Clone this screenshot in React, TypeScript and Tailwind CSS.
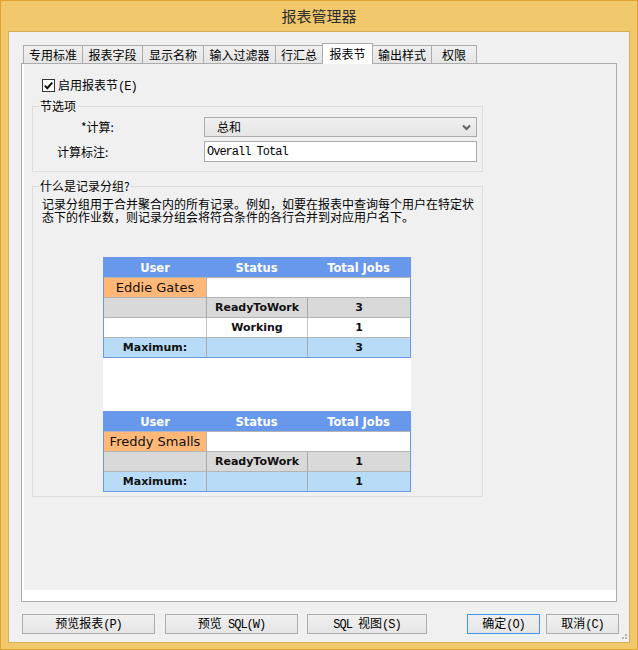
import React from 'react';

// ascii parts of the labels are drawn in a narrow mono face, like the bitmap font in the dialog
const A = ({ children }: { children: React.ReactNode }) => (
  <span className="font-['Liberation_Mono',monospace] text-[12px] tracking-[-1px]">{children}</span>
);

const tabs = [
  { label: '专用标准', w: 'w-[60px]' },
  { label: '报表字段', w: 'w-[61px]' },
  { label: '显示名称', w: 'w-[62px]' },
  { label: '输入过滤器', w: 'w-[73px]' },
  { label: '行汇总', w: 'w-[48px]' },
  { label: '报表节', w: 'w-[51px]', active: true },
  { label: '输出样式', w: 'w-[60px]' },
  { label: '权限', w: 'w-[46px]' },
];

type Row = {
  cells: [string, string, string];
  kind: 'user' | 'gray' | 'white' | 'max';
};

const HeaderRow = () => (
  <div className="flex h-[19px] items-center bg-[#6898eb] text-[11.5px] font-bold text-white">
    <div className="w-[102px] text-center">User</div>
    <div className="w-[101px] text-center">Status</div>
    <div className="flex-1 text-center">Total Jobs</div>
  </div>
);

const DataRow = ({ row }: { row: Row }) => {
  if (row.kind === 'user') {
    return (
      <div className="flex h-[20px] border-t border-[#b4b4b4] bg-white">
        <div className="flex w-[102px] items-center justify-center bg-[#ffb878] text-[13px] text-[#111]">
          {row.cells[0]}
        </div>
        <div className="flex-1 border-l border-[#b4b4b4]" />
      </div>
    );
  }
  const bg = row.kind === 'gray' ? 'bg-[#d9d9d9]' : row.kind === 'max' ? 'bg-[#b8dcf8]' : 'bg-white';
  const line = row.kind === 'white' ? 'border-[#c6c6c6]' : 'border-[#a9a9a9]';
  return (
    <div className={`flex h-[20px] border-t border-[#b4b4b4] text-[11px] font-bold text-[#111] ${bg}`}>
      <div className="flex w-[102px] items-center justify-center">{row.cells[0]}</div>
      <div className={`flex w-[101px] items-center justify-center border-l ${line}`}>{row.cells[1]}</div>
      <div className={`flex flex-1 items-center justify-center border-l ${line}`}>{row.cells[2]}</div>
    </div>
  );
};

const JobsTable = ({ user, rows, max }: { user: string; rows: [string, string][]; max: string }) => (
  <div className="w-[308px] border border-[#6a98ea] font-['DejaVu_Sans',sans-serif]">
    <HeaderRow />
    <DataRow row={{ cells: [user, '', ''], kind: 'user' }} />
    {rows.map((r, i) => (
      <DataRow key={i} row={{ cells: ['', r[0], r[1]], kind: i % 2 === 0 ? 'gray' : 'white' }} />
    ))}
    <DataRow row={{ cells: ['Maximum:', '', max], kind: 'max' }} />
  </div>
);

const Button = ({ children, w, primary }: { children: React.ReactNode; w: string; primary?: boolean }) => (
  <div
    className={`flex h-[20px] ${w} items-center justify-center border bg-gradient-to-b from-[#f0f0f0] to-[#e5e5e5] text-[12px] leading-[14px] text-black ${
      primary ? 'border-[#3d95f0]' : 'border-[#acacac]'
    }`}
  >
    <span className="whitespace-pre">{children}</span>
  </div>
);

export default function App() {
  return (
    <div className="flex h-[650px] w-[638px] flex-col border border-[#e0a42c] bg-[#f1c86c] font-['Noto_Sans_CJK_SC',sans-serif] text-black">
      {/* title bar */}
      <div className="flex h-[30px] items-center justify-center text-[15px] leading-[18px] text-[#2e2e2e]">
        报表管理器
      </div>

      {/* client area */}
      <div className="relative mx-[7px] h-[612px] border border-[#d4ad58] bg-[#f0f0f0]">
        {/* tabs */}
        <div className="ml-[14px] mt-[11px] flex h-[20px] items-end">
          {tabs.map((t, i) =>
            t.active ? (
              <div
                key={t.label}
                className={`${t.w} relative z-10 -mb-px flex h-[21px] items-center justify-center border border-b-0 border-[#acacac] bg-white text-[12px] leading-[14px] ${i > 0 ? '-ml-px' : ''}`}
              >
                {t.label}
              </div>
            ) : (
              <div
                key={t.label}
                className={`${t.w} flex h-[18px] items-center justify-center border border-b-0 border-[#acacac] bg-gradient-to-b from-[#f0f0f0] to-[#e5e5e5] text-[12px] leading-[14px] ${i > 0 ? '-ml-px' : ''}`}
              >
                {t.label}
              </div>
            ),
          )}
        </div>

        {/* tab page */}
        <div className="ml-[12px] flex h-[539px] w-[596px] flex-col border border-[#acacac] bg-white pb-[11px] pl-[2px]">
          <div className="flex-1 bg-[#f0f0f0] text-[12px] leading-[14px]">
            {/* enable checkbox */}
            <div className="ml-[18px] mt-[15px] flex h-[13px] items-center gap-[3px]">
              <div className="flex h-[13px] w-[13px] items-center justify-center border border-[#333] bg-white">
                <svg width="11" height="11" viewBox="0 0 11 11">
                  <path d="M1.8 5.6 L4.3 8.2 L9.2 2.6" fill="none" stroke="#111" strokeWidth="2" />
                </svg>
              </div>
              <span className="leading-[13px]">
                启用报表节<A>(E)</A>
              </span>
            </div>

            {/* section options */}
            <div className="relative ml-[8px] mt-[14px] h-[66px] w-[451px] border border-[#dcdcdc]">
              <span className="absolute left-[6px] top-[-8px] bg-[#f0f0f0] px-px">节选项</span>
              <div className="mt-[10px] flex h-[20px] items-center">
                <div className="w-[171px] pl-[48px]">*计算:</div>
                <div className="flex h-[20px] w-[273px] items-center justify-between border border-[#acacac] bg-gradient-to-b from-[#f0f0f0] to-[#e5e5e5] pl-[12px] pr-[5px]">
                  <span>总和</span>
                  <svg width="9" height="7" viewBox="0 0 9 7">
                    <path d="M1 1.5 L4.5 5 L8 1.5" fill="none" stroke="#606060" strokeWidth="2" />
                  </svg>
                </div>
              </div>
              <div className="mt-[4px] flex h-[21px] items-center">
                <div className="w-[171px] pl-[24px]">计算标注:</div>
                <div className="flex h-[21px] w-[273px] items-center border border-[#ababab] bg-white pl-[2px] font-['Liberation_Mono',monospace] text-[12px] tracking-[-1px]">
                  Overall Total
                </div>
              </div>
            </div>

            {/* what is record grouping */}
            <div className="relative ml-[8px] mt-[14px] h-[311px] w-[451px] border border-[#dcdcdc]">
              <span className="absolute left-[6px] top-[-8px] bg-[#f0f0f0] px-px">什么是记录分组?</span>
              <p className="pl-[9px] pt-[10px] leading-[13px]">
                记录分组用于合并聚合内的所有记录。例如，如要在报表中查询每个用户在特定状
                <br />
                态下的作业数，则记录分组会将符合条件的各行合并到对应用户名下。
              </p>
              <div className="ml-[70px] mt-[34px] h-[235px] w-[308px] bg-white">
                <JobsTable
                  user="Eddie Gates"
                  rows={[
                    ['ReadyToWork', '3'],
                    ['Working', '1'],
                  ]}
                  max="3"
                />
                <div className="mt-[53px]">
                  <JobsTable user="Freddy Smalls" rows={[['ReadyToWork', '1']]} max="1" />
                </div>
              </div>
            </div>
          </div>
        </div>

        {/* bottom buttons */}
        <div className="ml-[13px] mt-[12px] flex">
          <Button w="w-[133px]">
            预览报表<A>(P)</A>
          </Button>
          <div className="ml-[10px]">
            <Button w="w-[133px]">
              预览<A>{' SQL(W)'}</A>
            </Button>
          </div>
          <div className="ml-[9px]">
            <Button w="w-[120px]">
              <A>{'SQL '}</A>视图<A>(S)</A>
            </Button>
          </div>
          <div className="ml-[40px]">
            <Button w="w-[73px]" primary>
              确定<A>(O)</A>
            </Button>
          </div>
          <div className="ml-[6px]">
            <Button w="w-[73px]">
              取消<A>(C)</A>
            </Button>
          </div>
        </div>

        {/* size grip */}
        <svg className="absolute bottom-[1px] right-[1px]" width="8" height="8" viewBox="0 0 8 8">
          <rect x="5" y="1" width="2" height="2" fill="#b8b8b8" />
          <rect x="2" y="4" width="2" height="2" fill="#b8b8b8" />
          <rect x="5" y="4" width="2" height="2" fill="#b8b8b8" />
        </svg>
      </div>
    </div>
  );
}
